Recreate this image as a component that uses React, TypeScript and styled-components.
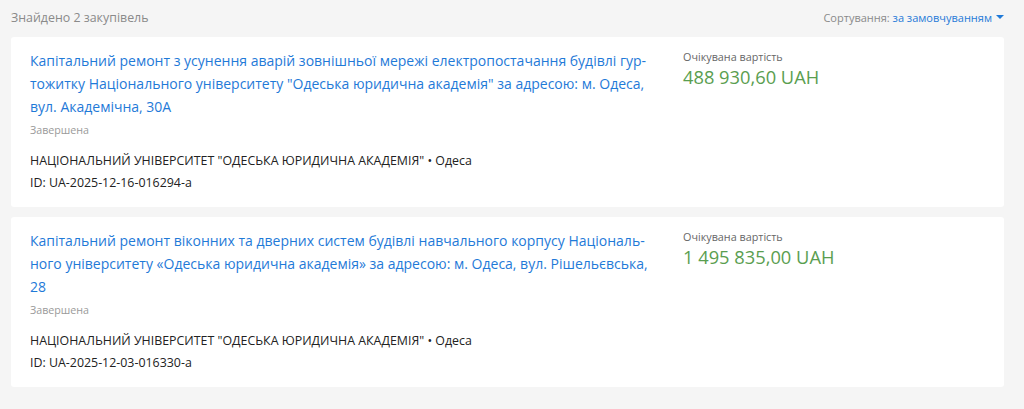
import styled, { createGlobalStyle } from "styled-components";

const GlobalStyle = createGlobalStyle`
    html, body {
        margin: 0;
        padding: 0;
        background: #f5f5f5;
        font-family: "Open Sans", "Noto Sans", sans-serif;
    }
`;

const tenders = [
    {
        title:
            "Капітальний ремонт з усунення аварій зовнішньої мережі електропостачання будівлі гур\u00ADтожитку Національного університету \"Одеська юридична академія\" за адресою: м. Одеса, вул. Академічна, 30А",
        status: "Завершена",
        buyer: "НАЦІОНАЛЬНИЙ УНІВЕРСИТЕТ \"ОДЕСЬКА ЮРИДИЧНА АКАДЕМІЯ\"",
        city: "Одеса",
        id: "UA-2025-12-16-016294-a",
        amount: "488 930,60 UAH",
    },
    {
        title:
            "Капітальний ремонт віконних та дверних систем будівлі навчального корпусу Національ\u00ADного університету «Одеська юридична академія» за адресою: м. Одеса, вул. Рішельєвська, 28",
        status: "Завершена",
        buyer: "НАЦІОНАЛЬНИЙ УНІВЕРСИТЕТ \"ОДЕСЬКА ЮРИДИЧНА АКАДЕМІЯ\"",
        city: "Одеса",
        id: "UA-2025-12-03-016330-a",
        amount: "1 495 835,00 UAH",
    },
];

const App = () => {
    return (
        <>
            <GlobalStyle />
            <Page>
                <Header>
                    <Found>Знайдено 2 закупівель</Found>
                    <Sort>
                        Сортування: <SortValue>за замовчуванням</SortValue>
                        <Caret />
                    </Sort>
                </Header>
                <List>
                    {tenders.map((t) => (
                        <Card key={t.id}>
                            <Main>
                                <Title href="#">{t.title}</Title>
                                <Status>{t.status}</Status>
                                <Meta>
                                    {t.buyer} • {t.city}
                                </Meta>
                                <Meta>ID: {t.id}</Meta>
                            </Main>
                            <Side>
                                <Label>Очікувана вартість</Label>
                                <Amount>{t.amount}</Amount>
                            </Side>
                        </Card>
                    ))}
                </List>
            </Page>
        </>
    );
};

export default App;

const Page = styled.div`
    padding: 0 20px 0 11px;
`;

const Header = styled.div`
    display: flex;
    justify-content: space-between;
    align-items: center;
    height: 37px;
    padding-bottom: 3px;
    box-sizing: border-box;
`;

const Found = styled.div`
    font-size: 12.4px;
    color: #8a8a8a;
`;

const Sort = styled.div`
    display: flex;
    align-items: center;
    font-size: 11px;
    color: #8a8a8a;
    white-space: pre;
`;

const SortValue = styled.span`
    color: #1f7ad8;
`;

const Caret = styled.span`
    width: 0;
    height: 0;
    margin-left: 4px;
    border-left: 4px solid transparent;
    border-right: 4px solid transparent;
    border-top: 4px solid #1f7ad8;
`;

const List = styled.div`
    display: flex;
    flex-direction: column;
    gap: 10px;
`;

const Card = styled.div`
    display: grid;
    grid-template-columns: 635px 1fr;
    height: 170px;
    box-sizing: border-box;
    padding: 12px 20px 0 19px;
    background: #ffffff;
    border-radius: 3px;
`;

const Main = styled.div`
    display: flex;
    flex-direction: column;
`;

const Title = styled.a`
    font-size: 14px;
    line-height: 23px;
    color: #1f7ad8;
    text-decoration: none;
`;

const Status = styled.div`
    margin-top: 4px;
    font-size: 10.7px;
    line-height: 16px;
    color: #9a9a9a;
    margin-bottom: 12px;
`;

const Meta = styled.div`
    font-size: 12.4px;
    line-height: 22px;
    color: #222;
`;

const Side = styled.div`
    padding-left: 18px;
`;

const Label = styled.div`
    font-size: 10.8px;
    line-height: 16px;
    color: #666;
`;

const Amount = styled.div`
    font-size: 18.3px;
    line-height: 24px;
    color: #5a9e50;
`;
